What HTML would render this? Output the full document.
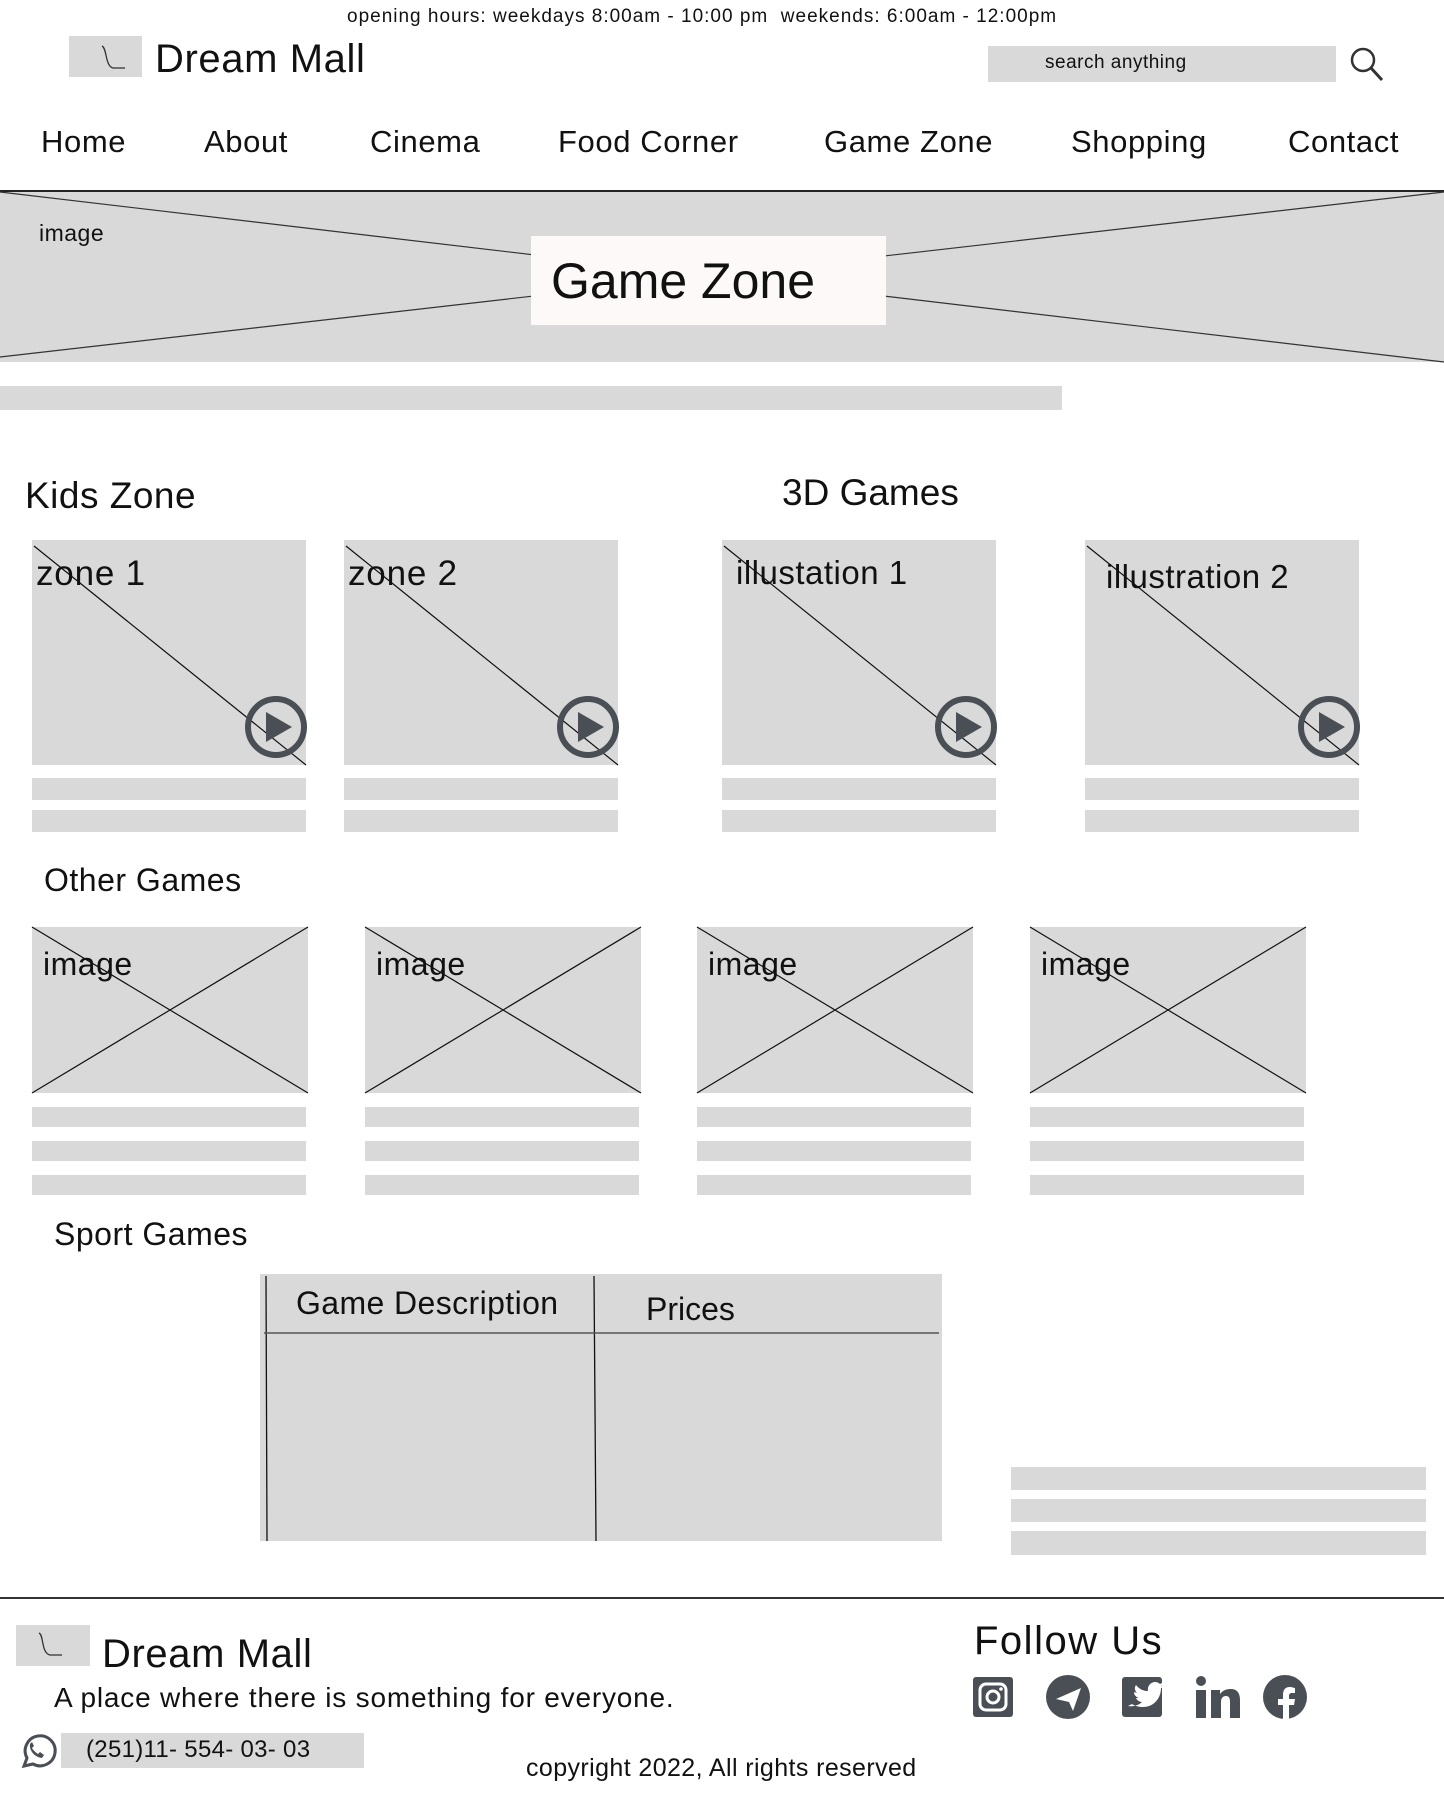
<!DOCTYPE html>
<html><head><meta charset="utf-8"><style>
*{margin:0;padding:0;box-sizing:border-box}
body{width:1444px;height:1800px;position:relative;background:#fff;font-family:"Liberation Sans",sans-serif;color:#111;overflow:hidden}
.a{position:absolute;white-space:nowrap}
.g{position:absolute;background:#d9d9d9}
svg{position:absolute;overflow:visible}
.nav{font-size:31px;top:124px;letter-spacing:0.6px}
</style></head><body>
<div class="a" style="left:347px;top:6px;font-size:19px;letter-spacing:1px">opening hours: weekdays 8:00am - 10:00 pm &nbsp;weekends: 6:00am - 12:00pm</div>
<div class="g" style="left:69px;top:36px;width:73px;height:41px"></div>
<svg style="left:69px;top:36px" width="73" height="41"><path d="M33 10 C38 12,36 30,44 32 L56 32" fill="none" stroke="#333" stroke-width="1.3"/></svg>
<div class="a" style="left:155px;top:37px;font-size:40px;letter-spacing:0.6px">Dream Mall</div>
<div class="g" style="left:988px;top:46px;width:348px;height:36px"></div>
<div class="a" style="left:1045px;top:52px;font-size:19px;letter-spacing:0.5px">search anything</div>
<svg style="left:1349px;top:46px" width="36" height="36"><circle cx="14" cy="14" r="11" fill="none" stroke="#333" stroke-width="2.5"/><path d="M22 22 L33 34" stroke="#333" stroke-width="3"/></svg>
<div class="a nav" style="left:41px">Home</div>
<div class="a nav" style="left:204px">About</div>
<div class="a nav" style="left:370px">Cinema</div>
<div class="a nav" style="left:558px">Food Corner</div>
<div class="a nav" style="left:824px">Game Zone</div>
<div class="a nav" style="left:1071px">Shopping</div>
<div class="a nav" style="left:1288px">Contact</div>
<div class="a" style="left:0;top:190px;width:1444px;height:1.5px;background:#222"></div>
<div class="g" style="left:0;top:192px;width:1444px;height:170px"></div>
<svg style="left:0;top:192px" width="1444" height="170"><path d="M0 0 L1444 170 M0 165 L1444 0" stroke="#333" stroke-width="1.2"/></svg>
<div class="a" style="left:39px;top:220px;font-size:23px;letter-spacing:0.5px">image</div>
<div class="a" style="left:531px;top:236px;width:355px;height:89px;background:#fcf9f8"></div>
<div class="a" style="left:551px;top:252px;font-size:50px">Game Zone</div>
<div class="g" style="left:0;top:386px;width:1062px;height:24px"></div>
<div class="a" style="left:25px;top:475px;font-size:37px;letter-spacing:0.5px">Kids Zone</div>
<div class="a" style="left:782px;top:472px;font-size:37px">3D Games</div>

<div class="g" style="left:32px;top:540px;width:274px;height:225px"></div>
<div class="g" style="left:344px;top:540px;width:274px;height:225px"></div>
<div class="g" style="left:722px;top:540px;width:274px;height:225px"></div>
<div class="g" style="left:1085px;top:540px;width:274px;height:225px"></div>
<div class="a" style="left:36px;top:554px;font-size:35px;letter-spacing:0.8px">zone 1</div>
<div class="a" style="left:348px;top:554px;font-size:35px;letter-spacing:0.8px">zone 2</div>
<div class="a" style="left:736px;top:554px;font-size:33px;letter-spacing:0.5px">illustation 1</div>
<div class="a" style="left:1106px;top:558px;font-size:33px;letter-spacing:0.5px">illustration 2</div>
<svg style="left:0;top:0" width="1444" height="800">
<g stroke="#111" stroke-width="1.2"><path d="M34 546 L306 765 M346 546 L618 765 M724 546 L996 765 M1087 546 L1359 765"/></g>
<g fill="none" stroke="#4a4f55" stroke-width="6"><circle cx="276" cy="727" r="28"/><circle cx="588" cy="727" r="28"/><circle cx="966" cy="727" r="28"/><circle cx="1329" cy="727" r="28"/></g>
<g fill="#4a4f55"><path d="M266 712 L292 727 L266 742Z"/><path d="M578 712 L604 727 L578 742Z"/><path d="M956 712 L982 727 L956 742Z"/><path d="M1319 712 L1345 727 L1319 742Z"/></g>
</svg>
<div class="g" style="left:32px;top:778px;width:274px;height:22px"></div>
<div class="g" style="left:32px;top:810px;width:274px;height:22px"></div>
<div class="g" style="left:344px;top:778px;width:274px;height:22px"></div>
<div class="g" style="left:344px;top:810px;width:274px;height:22px"></div>
<div class="g" style="left:722px;top:778px;width:274px;height:22px"></div>
<div class="g" style="left:722px;top:810px;width:274px;height:22px"></div>
<div class="g" style="left:1085px;top:778px;width:274px;height:22px"></div>
<div class="g" style="left:1085px;top:810px;width:274px;height:22px"></div>

<div class="a" style="left:44px;top:862px;font-size:32px;letter-spacing:0.5px">Other Games</div>
<div class="g" style="left:32px;top:927px;width:276px;height:166px"></div>
<div class="g" style="left:365px;top:927px;width:276px;height:166px"></div>
<div class="g" style="left:697px;top:927px;width:276px;height:166px"></div>
<div class="g" style="left:1030px;top:927px;width:276px;height:166px"></div>
<svg style="left:0;top:0" width="1444" height="1100"><g stroke="#111" stroke-width="1.2">
<path d="M32 927 L308 1093 M32 1093 L308 927"/><path d="M365 927 L641 1093 M365 1093 L641 927"/><path d="M697 927 L973 1093 M697 1093 L973 927"/><path d="M1030 927 L1306 1093 M1030 1093 L1306 927"/></g></svg>
<div class="a" style="left:43px;top:946px;font-size:32px;letter-spacing:0.5px">image</div>
<div class="a" style="left:376px;top:946px;font-size:32px;letter-spacing:0.5px">image</div>
<div class="a" style="left:708px;top:946px;font-size:32px;letter-spacing:0.5px">image</div>
<div class="a" style="left:1041px;top:946px;font-size:32px;letter-spacing:0.5px">image</div>
<div class="g" style="left:32px;top:1107px;width:274px;height:20px"></div>
<div class="g" style="left:32px;top:1141px;width:274px;height:20px"></div>
<div class="g" style="left:32px;top:1175px;width:274px;height:20px"></div>
<div class="g" style="left:365px;top:1107px;width:274px;height:20px"></div>
<div class="g" style="left:365px;top:1141px;width:274px;height:20px"></div>
<div class="g" style="left:365px;top:1175px;width:274px;height:20px"></div>
<div class="g" style="left:697px;top:1107px;width:274px;height:20px"></div>
<div class="g" style="left:697px;top:1141px;width:274px;height:20px"></div>
<div class="g" style="left:697px;top:1175px;width:274px;height:20px"></div>
<div class="g" style="left:1030px;top:1107px;width:274px;height:20px"></div>
<div class="g" style="left:1030px;top:1141px;width:274px;height:20px"></div>
<div class="g" style="left:1030px;top:1175px;width:274px;height:20px"></div>

<div class="a" style="left:54px;top:1216px;font-size:32px;letter-spacing:0.5px">Sport Games</div>
<div class="g" style="left:260px;top:1274px;width:682px;height:267px"></div>
<svg style="left:0;top:0" width="1444" height="1600"><path d="M266 1276 L267 1541 M594 1276 L596 1541" stroke="#111" stroke-width="1.3"/><path d="M264 1333 L939 1333" stroke="#555" stroke-width="1.5"/></svg>
<div class="a" style="left:296px;top:1285px;font-size:32px;letter-spacing:0.4px">Game Description</div>
<div class="a" style="left:646px;top:1291px;font-size:32px">Prices</div>
<div class="g" style="left:1011px;top:1467px;width:415px;height:23px"></div>
<div class="g" style="left:1011px;top:1499px;width:415px;height:23px"></div>
<div class="g" style="left:1011px;top:1531px;width:415px;height:24px"></div>

<div class="a" style="left:0;top:1597px;width:1444px;height:1.5px;background:#333"></div>
<div class="g" style="left:16px;top:1625px;width:74px;height:41px"></div>
<svg style="left:16px;top:1625px" width="74" height="41"><path d="M23 8 C28 10,25 28,34 30 L46 30" fill="none" stroke="#333" stroke-width="1.3"/></svg>
<div class="a" style="left:102px;top:1632px;font-size:40px;letter-spacing:0.6px">Dream Mall</div>
<div class="a" style="left:54px;top:1682px;font-size:28px;letter-spacing:0.8px">A place where there is something for everyone.</div>
<svg style="left:18px;top:1733px" width="36" height="36"><path d="M6 33 L9 25 A15 15 0 1 1 15 31 Z" fill="none" stroke="#4a4f55" stroke-width="3"/><path d="M12 11 C11 17,16 24,24 25 L26 22 L22 19 L20 21 C17 19,15 17,14 15 L16 13 L14 9Z" fill="#4a4f55"/></svg>
<div class="g" style="left:61px;top:1733px;width:303px;height:35px"></div>
<div class="a" style="left:86px;top:1736px;font-size:24px;letter-spacing:0.3px">(251)11- 554- 03- 03</div>
<div class="a" style="left:526px;top:1754px;font-size:25px;letter-spacing:0.4px">copyright 2022, All rights reserved</div>
<div class="a" style="left:974px;top:1619px;font-size:40px;letter-spacing:1.5px">Follow Us</div>
<svg style="left:0;top:0" width="1444" height="1800"><g fill="#4a4f55">
<rect x="973" y="1677" width="40" height="40" rx="3"/>
<circle cx="1068" cy="1697" r="22"/>
<rect x="1122" y="1677" width="40" height="40" rx="3"/>
<circle cx="1201" cy="1681" r="5"/><rect x="1196" y="1690" width="10" height="28"/>
<path d="M1211 1690 h9 v4 c3-4 7-5 11-5 c6 0 9 4 9 11 v18 h-10 v-16 c0-4-1-6-4-6 c-3 0-5 2-5 6 v16 h-10z"/>
<circle cx="1285" cy="1697" r="22"/></g>
<rect x="980" y="1684" width="26" height="26" rx="6" fill="none" stroke="#fff" stroke-width="3"/><circle cx="993" cy="1697" r="6" fill="none" stroke="#fff" stroke-width="3"/><circle cx="1001" cy="1689" r="1.8" fill="#fff"/>
<path d="M1056 1699 L1081 1688 L1073 1711 L1069 1702 Z" fill="#fff"/>
<path d="M1128 1706 c6 1 11-1 14-4 c-3 0-5-2-6-4 h3 c-3-1-5-3-5-6 l3 1 c-2-2-3-5-1-8 c3 4 7 6 12 6 c-1-5 3-9 7-9 c2 0 4 1 5 2 l4-2 c-1 2-2 3-3 4 l3-1 c-1 2-2 3-3 3 c0 10-7 19-18 19 c-4 0-8-1-11-3z" fill="#fff"/>
<path d="M1289 1719 v-14 h5 l1-6 h-6 v-3 c0-2 1-3 3-3 h3 v-5 c-1 0-3-1-5-1 c-5 0-7 3-7 8 v4 h-5 v6 h5 v14z" fill="#fff"/>
</svg>
</body></html>
